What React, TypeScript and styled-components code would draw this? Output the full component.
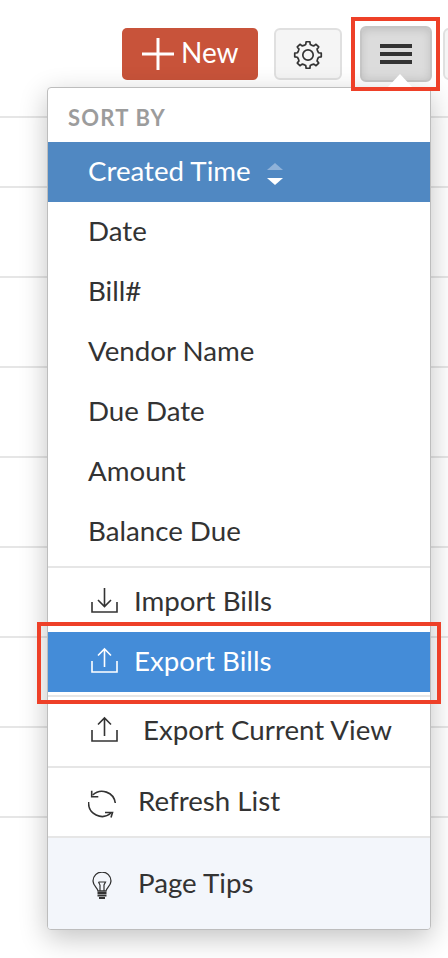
import styled, { createGlobalStyle } from 'styled-components'

const GlobalStyle = createGlobalStyle`
  html, body {
    margin: 0;
    padding: 0;
    background: #fff;
  }
  * {
    box-sizing: border-box;
  }
`

const Page = styled.div`
  position: relative;
  width: 448px;
  height: 958px;
  overflow: hidden;
  background: #fff;
  font-family: Lato, "Liberation Sans", sans-serif;
  color: #333;
`

const Toolbar = styled.div`
  display: flex;
  align-items: center;
  height: 54px;
  margin-top: 27px;
  padding-left: 122px;
`

const NewButton = styled.div`
  flex: none;
  display: flex;
  align-items: center;
  width: 136px;
  height: 52px;
  padding: 0 0 4px 20px;
  gap: 7px;
  border-radius: 5px;
  background: #c8533a;
  color: #fff;
  font-size: 28px;
`

const ToolButton = styled.div<{ $active?: boolean; $left: number; $width: number }>`
  flex: none;
  display: flex;
  align-items: center;
  justify-content: center;
  width: ${p => p.$width}px;
  height: ${p => (p.$active ? 56 : 52)}px;
  margin-left: ${p => p.$left}px;
  border-radius: 6px;
  border: 2px solid ${p => (p.$active ? '#c6c6c6' : '#e0e0e0')};
  background: ${p => (p.$active ? '#dcdcdc' : '#f5f5f5')};
  box-shadow: ${p => (p.$active ? 'inset 0 2px 8px rgba(0,0,0,.12)' : 'none')};
`

const Burger = styled.div`
  display: flex;
  flex-direction: column;
  gap: 4px;
  width: 32px;
`

const BurgerBar = styled.span`
  display: block;
  height: 4px;
  background: #333;
`

const BackRow = styled.div<{ $height: number }>`
  height: ${p => p.$height}px;
  border-bottom: 2px solid #e6e6e6;
`

const Caret = styled.div`
  position: absolute;
  left: 387px;
  top: 74px;
  width: 0;
  height: 0;
  border-left: 13px solid transparent;
  border-right: 13px solid transparent;
  border-bottom: 14px solid #fff;
  z-index: 3;
`

const Menu = styled.div`
  position: absolute;
  left: 47px;
  top: 87px;
  width: 384px;
  height: 843px;
  border: 1px solid #bdbdbd;
  border-radius: 4px;
  background: #fff;
  box-shadow: 0 8px 28px rgba(0, 0, 0, 0.24);
  overflow: hidden;
  z-index: 2;
`

const SortLabel = styled.div`
  height: 54px;
  padding: 17px 0 0 20px;
  font-size: 22px;
  line-height: 26px;
  font-weight: 700;
  letter-spacing: 1.2px;
  color: #9c9c9c;
`

const Item = styled.div<{ $height?: number; $selected?: boolean; $highlight?: boolean; $tint?: boolean; $gap?: number; $pad?: number }>`
  display: flex;
  align-items: center;
  gap: ${p => p.$gap ?? 0}px;
  height: ${p => p.$height ?? 60}px;
  padding: 0 0 4px ${p => p.$pad ?? 40}px;
  font-size: 27.7px;
  background: ${p => (p.$selected ? '#5088c2' : p.$highlight ? '#448cd8' : p.$tint ? '#f3f6fb' : 'transparent')};
  color: ${p => (p.$selected || p.$highlight ? '#fff' : '#333')};
`

const Divider = styled.div<{ $top?: number; $bottom?: number }>`
  height: 2px;
  margin-top: ${p => p.$top ?? 0}px;
  margin-bottom: ${p => p.$bottom ?? 0}px;
  background: #e6e6e6;
`

const SortArrows = styled.span`
  display: flex;
  flex-direction: column;
  gap: 8px;
  margin: 8px 0 0 16px;
`

const Arrow = styled.span<{ $down?: boolean }>`
  width: 0;
  height: 0;
  border-left: 8px solid transparent;
  border-right: 8px solid transparent;
  ${p => (p.$down ? 'border-top: 7px solid #fff;' : 'border-bottom: 7px solid #8fb2d9;')}
`

const Highlight = styled.div<{ $x: number; $y: number; $w: number; $h: number }>`
  position: absolute;
  left: ${p => p.$x}px;
  top: ${p => p.$y}px;
  width: ${p => p.$w}px;
  height: ${p => p.$h}px;
  border: 4px solid #ee4028;
  z-index: 4;
`

const PlusSvg = styled.svg`
  flex: none;
  margin-top: 4px;
`

const LoweredSvg = styled.svg`
  flex: none;
  margin-top: 8px;
`

const GearSvg = styled.svg`
  flex: none;
  margin-top: 2px;
`

function PlusIcon() {
  return (
    <PlusSvg width="32" height="32" viewBox="0 0 32 32" fill="none" stroke="#fff" strokeWidth="3">
      <path d="M0 16h32M16 0v32" />
    </PlusSvg>
  )
}

// eight chunky teeth, one pointing straight up
function gearPath() {
  const stops: [number, number][] = [[-23, 10.4], [-12, 10.8], [-8, 13.4], [8, 13.4], [12, 10.8]]
  const points: string[] = []
  for (let i = 0; i < 8; i++) {
    for (const [offset, r] of stops) {
      const a = ((i * 45 + offset - 90) * Math.PI) / 180
      points.push(`${(15 + r * Math.cos(a)).toFixed(2)} ${(15 + r * Math.sin(a)).toFixed(2)}`)
    }
  }
  return `M${points.join('L')}Z`
}

function GearIcon() {
  return (
    <GearSvg width="30" height="30" viewBox="0 0 30 30" fill="none" stroke="#333" strokeWidth="1.7" strokeLinejoin="round">
      <path d={gearPath()} />
      <circle cx="15" cy="15" r="5.200" />
    </GearSvg>
  )
}

function ImportIcon() {
  return (
    <svg width="27" height="27" viewBox="0 0 27 27" fill="none" stroke="currentColor" strokeWidth="1.6">
      <path d="M1 15v10h25V15" />
      <path d="M13.500 1v18M7 13l6.500 6.500L20 13" />
    </svg>
  )
}

function ExportIcon() {
  return (
    <svg width="27" height="27" viewBox="0 0 27 27" fill="none" stroke="currentColor" strokeWidth="1.6">
      <path d="M1 14v11h25V14" />
      <path d="M13.500 20V2M7 8.500L13.500 2 20 8.500" />
    </svg>
  )
}

function RefreshIcon() {
  return (
    <LoweredSvg width="29" height="29" viewBox="0 0 29 29" fill="none" stroke="#333" strokeWidth="1.600">
      <path d="M4.700 5A13.500 13.500 0 0 1 27.300 13" />
      <path d="M3.700 0.700V6.700H10.300" />
      <path d="M0.600 12A13.500 13.500 0 0 0 23 23" />
      <path d="M17 22.500H24.500L23 27.500" />
    </LoweredSvg>
  )
}

function BulbIcon() {
  return (
    <LoweredSvg width="20" height="28" viewBox="0 0 20 28" fill="none" stroke="#333" strokeWidth="1.300">
      <path d="M6 19c0-3-5-5-5-10a9 9 0 0 1 18 0c0 5-5 7-5 10z" />
      <path d="M6.500 10h7L12 13v6M8 13v6M6.500 10L8 13" strokeWidth="1.200" />
      <path d="M5.500 21h9M5.500 23.500h9M7 26h6" strokeWidth="2" />
    </LoweredSvg>
  )
}

const sortFields = ['Date', 'Bill#', 'Vendor Name', 'Due Date', 'Amount', 'Balance Due']
const backRowHeights = [37, 70, 90, 90, 90, 90, 90, 90, 90]

export default function App() {
  return (
    <Page>
      <GlobalStyle />
      <Toolbar>
        <NewButton>
          <PlusIcon />
          New
        </NewButton>
        <ToolButton $left={16} $width={68}>
          <GearIcon />
        </ToolButton>
        <ToolButton $active $left={18} $width={72}>
          <Burger>
            <BurgerBar />
            <BurgerBar />
            <BurgerBar />
          </Burger>
        </ToolButton>
        <ToolButton $left={11} $width={40} />
      </Toolbar>

      {backRowHeights.map((h, i) => (
        <BackRow key={i} $height={h} />
      ))}

      <Caret />
      <Menu>
        <SortLabel>SORT BY</SortLabel>
        <Item $selected>
          Created Time
          <SortArrows>
            <Arrow />
            <Arrow $down />
          </SortArrows>
        </Item>
        {sortFields.map(field => (
          <Item key={field}>{field}</Item>
        ))}
        <Divider $top={4} $bottom={4} />
        <Item $pad={43} $gap={16}>
          <ImportIcon />
          Import Bills
        </Item>
        <Item $pad={43} $highlight $gap={16}>
          <ExportIcon />
          Export Bills
        </Item>
        <Divider $top={3} />
        <Item $pad={43} $gap={25} $height={69}>
          <ExportIcon />
          Export Current View
        </Item>
        <Divider />
        <Item $gap={21} $height={68}>
          <RefreshIcon />
          Refresh List
        </Item>
        <Divider />
        <Item $pad={44} $tint $gap={26} $height={92}>
          <BulbIcon />
          Page Tips
        </Item>
      </Menu>

      <Highlight $x={351} $y={17} $w={89} $h={74} />
      <Highlight $x={37} $y={622} $w={404} $h={82} />
    </Page>
  )
}
